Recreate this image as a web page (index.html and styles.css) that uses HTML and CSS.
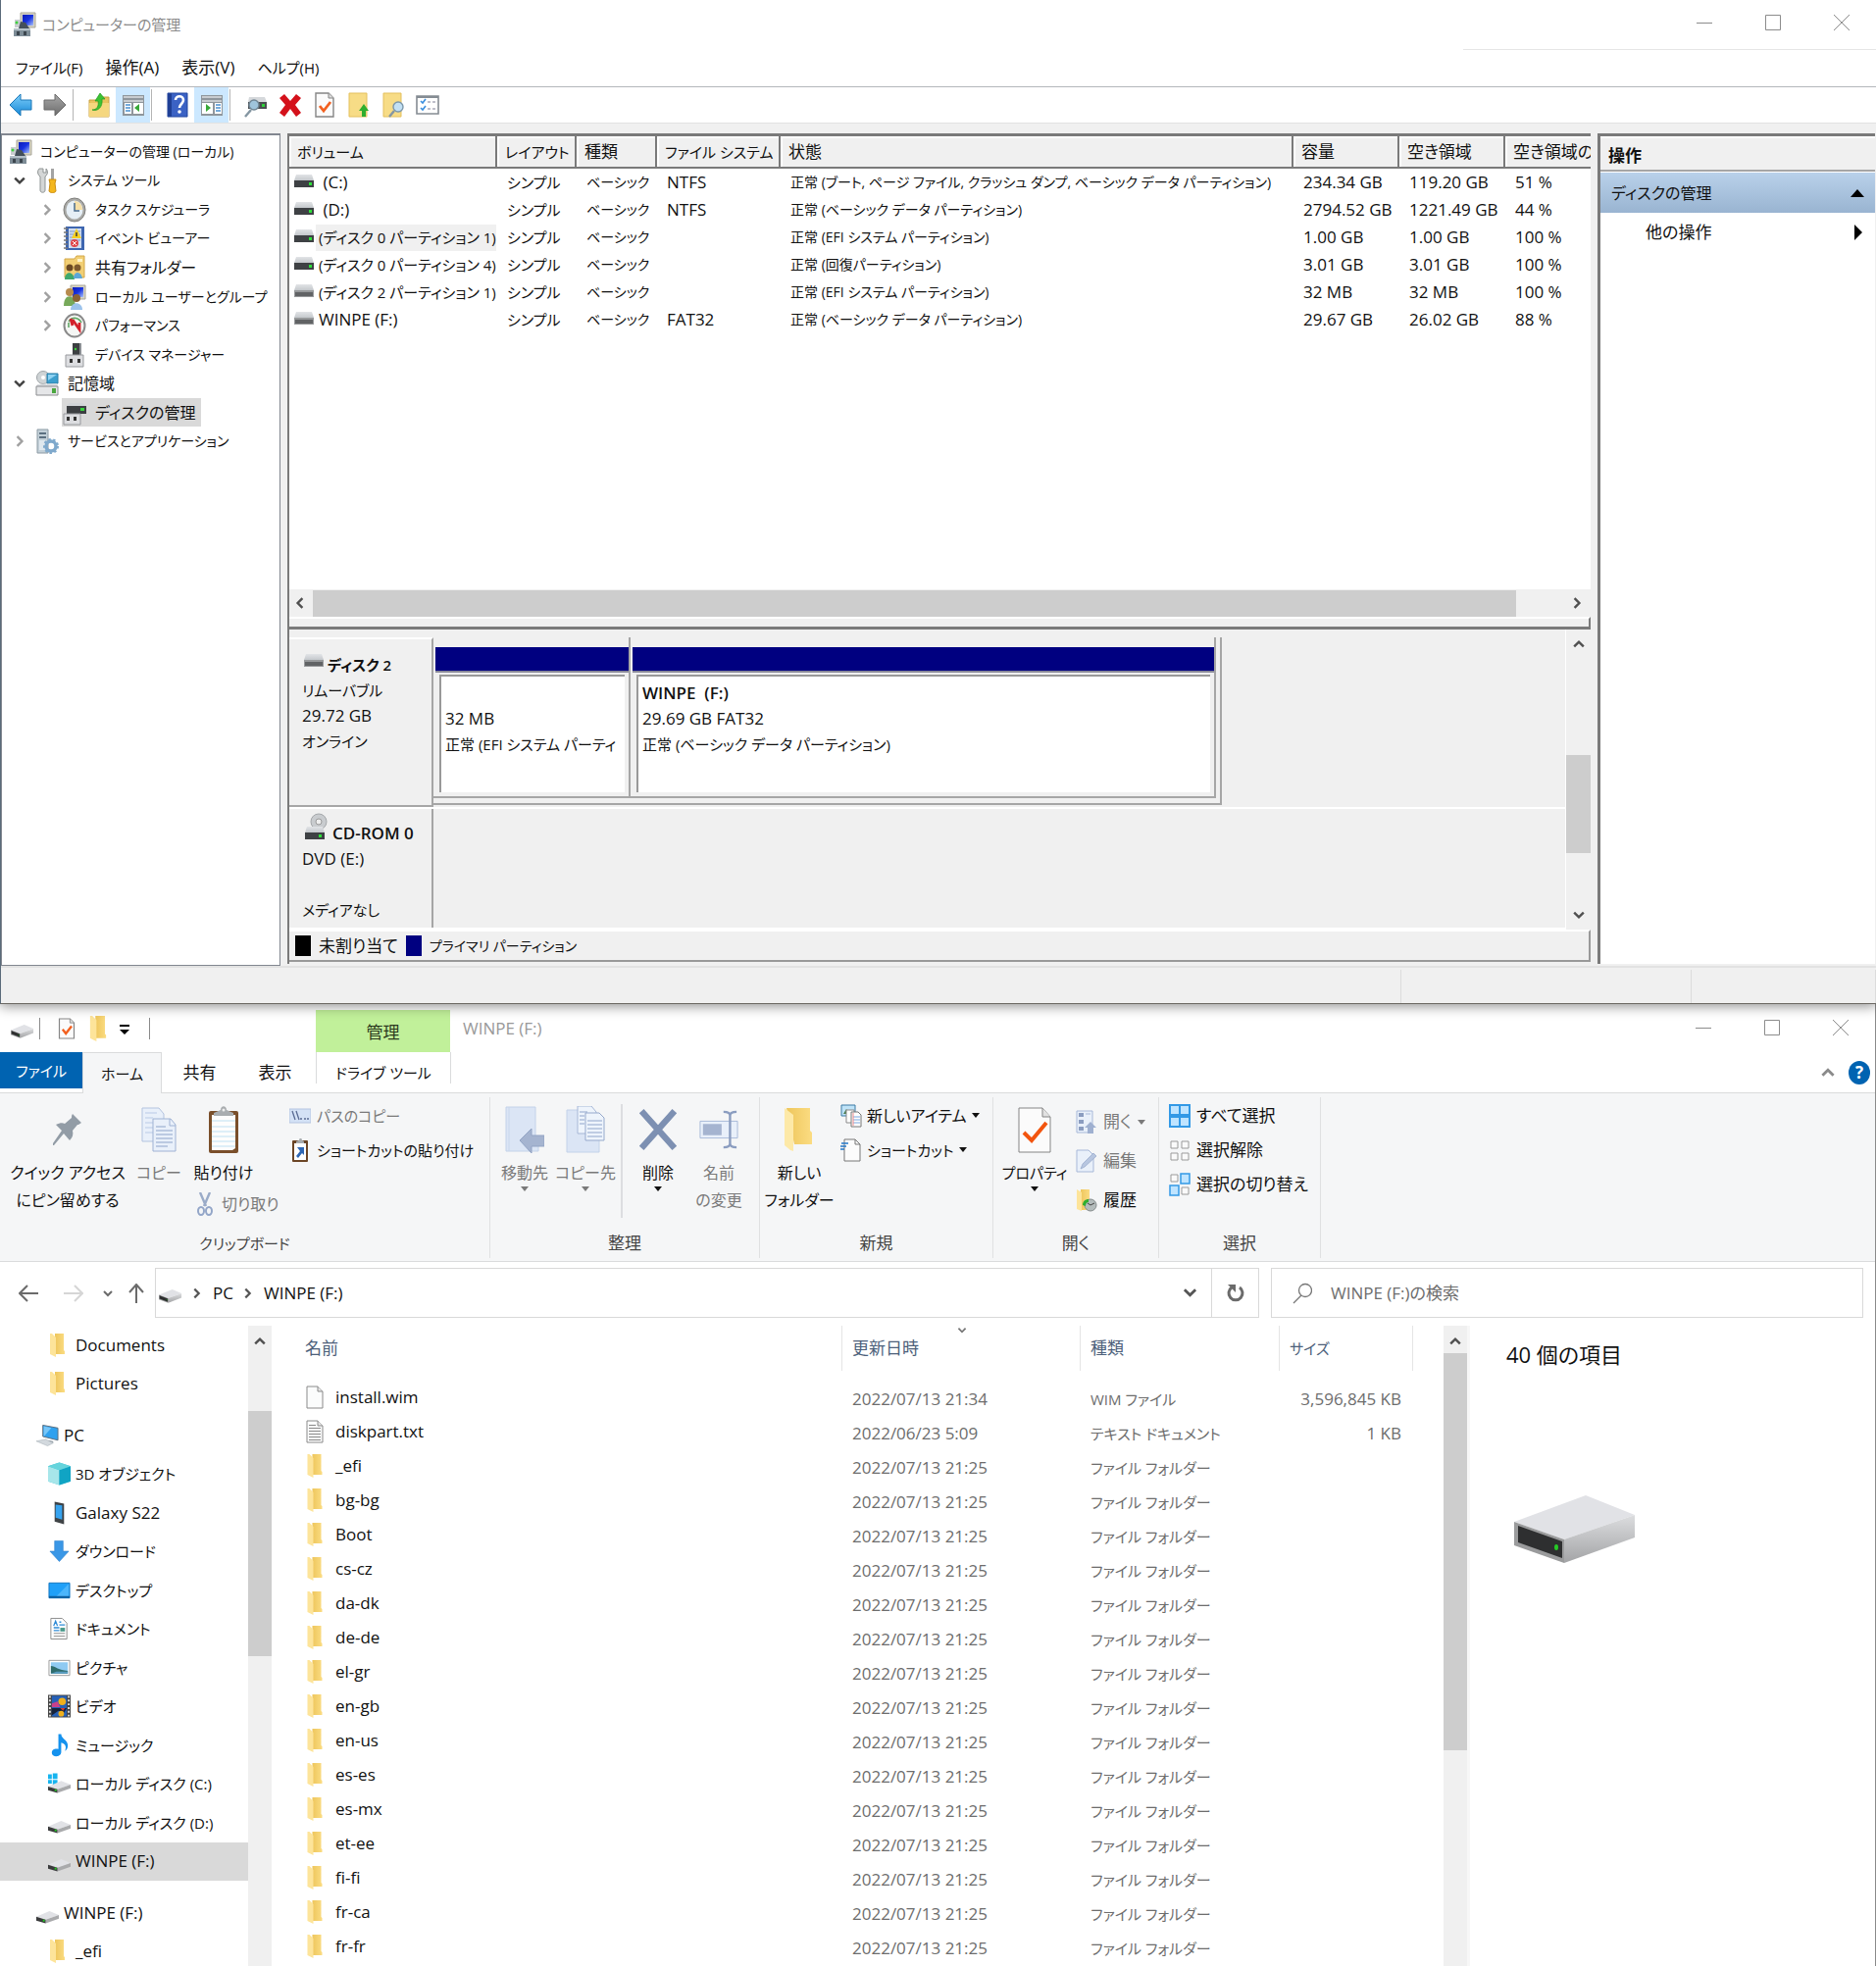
FILE: index.html
```html
<!DOCTYPE html>
<html lang="ja">
<head>
    <meta charset="UTF-8">
    <meta name="viewport" content="width=device-width, initial-scale=1.0">
    <title>コンピューターの管理</title>
    <link rel="stylesheet" href="styles.css">
</head>
<body>
    <!-- icon sprite -->
    <svg class="sprite" aria-hidden="true">
        <defs>
            <linearGradient id="gFolder" x1="0" x2="1"><stop offset="0" stop-color="#eec65c"/><stop offset="1" stop-color="#fbdc82"/></linearGradient>
            <linearGradient id="gBlue" x1="0" y1="0" x2="0" y2="1"><stop offset="0" stop-color="#7fd0fb"/><stop offset="1" stop-color="#1687d6"/></linearGradient>
            <linearGradient id="gGray" x1="0" y1="0" x2="0" y2="1"><stop offset="0" stop-color="#a8a8a8"/><stop offset="1" stop-color="#6c6c6c"/></linearGradient>
            <linearGradient id="gScreen" x1="0" y1="0" x2="1" y2="1"><stop offset="0" stop-color="#0a1bb8"/><stop offset=".5" stop-color="#1832e0"/><stop offset="1" stop-color="#a9c2fa"/></linearGradient>
            <linearGradient id="gSide" x1="0" y1="0" x2="0" y2="1"><stop offset="0" stop-color="#dcdddf"/><stop offset="1" stop-color="#a3a4a6"/></linearGradient>
            <linearGradient id="gTop" x1="0" y1="0" x2="0" y2="1"><stop offset="0" stop-color="#e2e4e7"/><stop offset="1" stop-color="#c4c8cc"/></linearGradient>
        </defs>
        <symbol id="i-computer" viewBox="0 0 24 26">
            <path d="M8 1h15v15H8z" fill="#d6d3c4" stroke="#a9a698"/>
            <path d="M10 3h11v11H10z" fill="url(#gScreen)"/>
            <path d="M2 8h6v8H2z" fill="#c9ccd0"/><circle cx="4" cy="11" r="1.5" fill="#3fd13f"/>
            <path d="M8 10l5 1 4 6H6z" fill="#44505a"/>
            <path d="M1 17h17v8H1z" fill="#7e8d97"/><path d="M1 17h17v2H1z" fill="#b4c0c8"/>
            <path d="M4 20h3v4H4zM11 20h3v4h-3z" fill="#3c464e"/>
        </symbol>
        <symbol id="i-back" viewBox="0 0 24 26"><path d="M1 13L12 2v6h11v10H12v6z" fill="url(#gBlue)" stroke="#1c78b8"/></symbol>
        <symbol id="i-fwd" viewBox="0 0 24 26"><path d="M23 13L12 2v6H1v10h11v6z" fill="url(#gGray)" stroke="#6a6a6a"/></symbol>
        <symbol id="i-folderup" viewBox="0 0 24 26">
            <path d="M2 8h9l2-3h9v20H2z" fill="#e9c35e" stroke="#c9a040"/><path d="M2 11h20v14H2z" fill="#f5d77f"/>
            <path d="M5 18c5 0 7-4 6-9H8l5-8 5 6h-3c1 8-4 13-10 11z" fill="#3cc234" stroke="#1f9a20" stroke-width=".7"/>
        </symbol>
        <symbol id="i-paneleft" viewBox="0 0 24 26">
            <path d="M1 3h22v21H1z" fill="#8f969c"/><path d="M2 4h20v2H2zM2 8h20v2H2z" fill="#c8ccd0"/>
            <path d="M3 11h7v11H3zM12 11h10v11H12z" fill="#fff"/>
            <path d="M4 13h5M4 16h5M4 19h5" stroke="#4a90d0" stroke-width="1.5"/><path d="M18 12v8l-5-4z" fill="#38a838"/>
        </symbol>
        <symbol id="i-paneright" viewBox="0 0 24 26">
            <path d="M1 3h22v21H1z" fill="#8f969c"/><path d="M2 4h20v2H2zM2 8h20v2H2z" fill="#c8ccd0"/>
            <path d="M2 11h11v11H2zM15 11h7v11h-7z" fill="#fff"/>
            <path d="M16 13h5M16 16h5M16 19h5" stroke="#4a90d0" stroke-width="1.5"/><path d="M6 12v8l5-4z" fill="#38a838"/>
        </symbol>
        <symbol id="i-help" viewBox="0 0 24 26">
            <path d="M2 1h20v24H2z" fill="#3b62c4"/><path d="M2 1h4v24H2z" fill="#1f3f94"/><path d="M2 25V1h20v24z" fill="none" stroke="#2347a0"/>
            <path d="M10 8c0-5 8-5 8 0 0 4-4 4-4 8" fill="none" stroke="#fff" stroke-width="2.6"/><circle cx="14" cy="20" r="1.8" fill="#fff"/>
        </symbol>
        <symbol id="i-drivesearch" viewBox="0 0 24 26">
            <path d="M5 5h16l2 5H4z" fill="#d5d8db"/><path d="M4 10h19v7H4z" fill="#4a4d50"/><path d="M18 12h3v3h-3z" fill="#2fd03a"/>
            <circle cx="10" cy="13" r="5" fill="#9fc4dc" stroke="#708594" stroke-width="1.4"/><path d="M7 18l-6 7" stroke="#8496a2" stroke-width="2.4"/>
        </symbol>
        <symbol id="i-redx" viewBox="0 0 24 26"><path d="M6 2l6 7 6-7 5 4-6 7 6 8-5 4-6-8-6 8-5-4 6-8-6-7z" fill="#d4111b"/></symbol>
        <symbol id="i-checkdoc" viewBox="0 0 24 26">
            <path d="M3 1h13l5 5v19H3z" fill="#fbfbfb" stroke="#858585" stroke-width="1.4"/><path d="M16 1v5h5" fill="#ddd" stroke="#858585"/>
            <path d="M7 14l4 5 7-9" fill="none" stroke="#f2601f" stroke-width="2.8"/>
        </symbol>
        <symbol id="i-foldergreen" viewBox="0 0 24 26">
            <path d="M2 1h18v24H2z" fill="#f7dc86" stroke="#e3bf5c"/><path d="M17 12l5 7h-3v6h-4v-6h-3z" fill="#2fae2f"/>
        </symbol>
        <symbol id="i-foldersearch" viewBox="0 0 24 26">
            <path d="M2 1h18v24H2z" fill="#f7dc86" stroke="#e3bf5c"/><circle cx="17" cy="15" r="5" fill="#c3e1f5" stroke="#7c98ab" stroke-width="1.4"/><path d="M13 19l-5 6" stroke="#8496a2" stroke-width="2.4"/>
        </symbol>
        <symbol id="i-listcheck" viewBox="0 0 24 26">
            <path d="M1 4h22v18H1z" fill="#fff" stroke="#858c93" stroke-width="1.6"/><path d="M1 4h22v2H1z" fill="#858c93"/>
            <path d="M5 9l2 2 3-4M5 16l2 2 3-4" fill="none" stroke="#3a8ede" stroke-width="1.6"/><path d="M12 10h3M12 17h3M17 10h3M17 17h3" stroke="#aab" stroke-width="1.4"/>
        </symbol>
        <symbol id="i-tools" viewBox="0 0 24 26">
            <path d="M4 1C2 3 2 7 5 9v14c0 3 5 3 5 0V9c3-2 3-6 1-8v4H8V1z" fill="#d4d6d6" stroke="#8f9494"/>
            <path d="M16 1h3v11h-3z" fill="#a3a3a3"/><path d="M14 12h7l-1 4 1 8c-1 2-6 2-7 0l1-8z" fill="#f4b71e" stroke="#cc8d10"/>
        </symbol>
        <symbol id="i-clock" viewBox="0 0 24 26">
            <ellipse cx="12" cy="13" rx="11" ry="12" fill="#a9a9a6" stroke="#7f7f7c"/><ellipse cx="12" cy="13" rx="8.500" ry="9.500" fill="#e6eff6"/>
            <path d="M12 13V4c5 0 8 4 8 9z" fill="#f6dfa6"/><path d="M12 6v8h5" fill="none" stroke="#4b6c8c" stroke-width="1.5"/>
        </symbol>
        <symbol id="i-event" viewBox="0 0 24 26">
            <path d="M3 1h19v24H3z" fill="#3e66b0"/><path d="M6 3h13v20H6z" fill="#cfdcf0"/><path d="M7 6h11M7 9h11M7 12h11M7 15h11" stroke="#7f98c4"/>
            <path d="M1 3h4M1 7h4M1 11h4M1 15h4M1 19h4M1 23h4" stroke="#777" stroke-width="1.4"/>
            <path d="M14 3l5 10H9z" fill="#f6cf1f"/><path d="M14 7v4" stroke="#333" stroke-width="1.4"/><circle cx="12" cy="18" r="4" fill="#e0484c"/><path d="M10 16l4 4M14 16l-4 4" stroke="#fff"/>
        </symbol>
        <symbol id="i-share" viewBox="0 0 24 26">
            <path d="M2 4h10l2-3h8v22H2z" fill="#f2cf74" stroke="#d3a748"/><path d="M15 4h5v3h-5z" fill="#fff3c8"/>
            <circle cx="7" cy="13" r="3.500" fill="#6b4a24"/><circle cx="15" cy="13" r="3.500" fill="#7d5a2e"/>
            <path d="M2 25c0-9 9-9 10 0z" fill="#3fa86c"/><path d="M11 24c0-8 8-8 9 0z" fill="#5ba7d8"/>
        </symbol>
        <symbol id="i-users" viewBox="0 0 24 26">
            <path d="M8 1h15v14H8z" fill="#d6d3c4" stroke="#a9a698"/><path d="M10 3h11v10H10z" fill="url(#gScreen)"/>
            <circle cx="7" cy="8" r="4" fill="#b78b4e"/><path d="M1 22c0-13 11-13 12 0z" fill="#77a95a"/>
            <circle cx="14" cy="14" r="4" fill="#8a6234"/><path d="M8 26c0-9 12-9 12 0z" fill="#9cc3ec"/>
        </symbol>
        <symbol id="i-perf" viewBox="0 0 24 26">
            <ellipse cx="12" cy="13" rx="10.500" ry="11.500" fill="#f5f6f4" stroke="#8a8a8a" stroke-width="2"/>
            <path d="M6 9c3-5 10-5 13 1" fill="none" stroke="#62a866" stroke-width="1.6"/><path d="M8 6l2 7M10 7l7 10V10" fill="none" stroke="#d2202a" stroke-width="2.8"/><path d="M6 15v-5" stroke="#62a866" stroke-width="1.6"/>
        </symbol>
        <symbol id="i-device" viewBox="0 0 24 26">
            <path d="M10 1h7v12h-7z" fill="#3c3f42"/><circle cx="13" cy="7" r="1.200" fill="#3bd43b"/><path d="M17 1h2v12h-2z" fill="#8b8f93"/>
            <path d="M3 13h18v12H3z" fill="#dcdde0" stroke="#989a9e"/><path d="M7 17h3v4H7zM15 17h3v4h-3z" fill="#333"/>
        </symbol>
        <symbol id="i-storage" viewBox="0 0 24 26">
            <circle cx="8" cy="7" r="6.500" fill="#cfd4d6" stroke="#9fa5a8"/><circle cx="8" cy="7" r="2" fill="#fff"/>
            <path d="M12 3h11v10H12z" fill="#3c9fce" stroke="#2b7ea8"/><path d="M13 4h9l-9 6z" fill="#8fd2f2"/>
            <path d="M2 14l20-1 1 4H1z" fill="#d9dcdf"/><path d="M1 16h22v9H1z" fill="#e5e6e8" stroke="#8b8d90"/><path d="M17 18h4v5h-4z" fill="#4ba73f"/>
        </symbol>
        <symbol id="i-diskmgr" viewBox="0 0 24 26">
            <path d="M6 3h15l2 3H4z" fill="#d2d5d8"/><path d="M4 6h20v8H4z" fill="#3c3f42"/><path d="M18 8h4v3h-4z" fill="#37d23c"/>
            <path d="M1 14h17v11H1z" fill="#dcdde0" stroke="#989a9e"/><path d="M4 17h3v4H4zM11 17h3v4h-3z" fill="#333"/>
        </symbol>
        <symbol id="i-services" viewBox="0 0 24 26">
            <path d="M2 1h11v24H2z" fill="#c3d0d8" stroke="#8c9aa4"/><path d="M4 4h7v2H4zM4 8h7v2H4z" fill="#5c7080"/><path d="M4 12h7v10H4z" fill="#dfe8ee"/>
            <circle cx="16" cy="18" r="5" fill="none" stroke="#7fa9cc" stroke-width="3.500"/><circle cx="16" cy="18" r="7" fill="none" stroke="#7fa9cc" stroke-width="2" stroke-dasharray="2.5 2.5"/>
        </symbol>
        <symbol id="i-vol" viewBox="0 0 20 14">
            <path d="M2 0h16l2 6H0z" fill="url(#gTop)"/><path d="M0 6h20v7H0z" fill="#3e4144"/><path d="M15 8h3v3h-3z" fill="#2ee03a"/>
        </symbol>
        <symbol id="i-volrm" viewBox="0 0 20 14">
            <path d="M2 0h16l2 6H0z" fill="url(#gTop)"/><path d="M0 6h20v7H0z" fill="#97999b"/><path d="M1 8h18v4H1z" fill="#616365"/>
        </symbol>
        <symbol id="i-cd" viewBox="0 0 24 28">
            <circle cx="15" cy="9" r="8" fill="#c9cccf" stroke="#a5a8ab"/><circle cx="15" cy="9" r="3" fill="#eee" stroke="#999"/>
            <path d="M3 14h16l2 6H1z" fill="url(#gTop)"/><path d="M1 20h20v7H1z" fill="#3e4144"/><path d="M15 22h3v3h-3z" fill="#2ee03a"/>
        </symbol>
        <symbol id="i-drive" viewBox="0 0 128 70" preserveAspectRatio="none">
            <path d="M0 27L73 0l50 20-72 25z" fill="#e1e2e6"/><path d="M51 45l72-25v23L51 69z" fill="url(#gSide)"/>
            <path d="M0 27l51 18v24L0 51z" fill="#9a9b9c"/><path d="M4 31l45 16v17L4 48z" fill="#2e2f30"/><ellipse cx="43" cy="53" rx="2" ry="3" fill="#26c926"/>
        </symbol>
        <symbol id="i-folder" viewBox="0 0 15 24">
            <path d="M5 0h9v17l1 1v3H5z" fill="url(#gFolder)"/><path d="M0 0h2l4 4v20l-2-1-4-2z" fill="#fde49a"/>
        </symbol>
        <symbol id="i-file" viewBox="0 0 18 24"><path d="M1 1h11l5 5v17H1z" fill="#fbfcfc" stroke="#8a8a8a"/><path d="M12 1v5h5" fill="#e8e8e8" stroke="#8a8a8a"/></symbol>
        <symbol id="i-text" viewBox="0 0 18 24"><path d="M1 1h11l5 5v17H1z" fill="#fbfcfc" stroke="#8a8a8a"/><path d="M12 1v5h5" fill="#e8e8e8" stroke="#8a8a8a"/><path d="M3 5.500h7M3 8.500h12M3 11.500h12M3 14.500h12M3 17.500h12M3 20.500h12" stroke="#888"/></symbol>
        <symbol id="i-pc" viewBox="0 0 24 24">
            <path d="M7 1l16 3v13L7 13z" fill="#2fa1ef" stroke="#5c6c7a"/><path d="M8 2l8 2-8 9z" fill="#77c6f8"/><path d="M13 17l5 1v2l-6-1z" fill="#98a2ab"/><path d="M0 18l10-2 8 4-6 3z" fill="#d3d9de" stroke="#a9b2ba" stroke-width=".6"/>
        </symbol>
        <symbol id="i-3d" viewBox="0 0 24 24"><path d="M12 0l12 4v16l-12 4L0 20V4z" fill="#3cc2d4"/><path d="M0 4l12 4v16L0 20z" fill="#a7e6ea"/><path d="M12 8l12-4v16l-12 4z" fill="#10a4c4"/><path d="M0 4l12-4 12 4-12 4z" fill="#66d4dc"/></symbol>
        <symbol id="i-phone" viewBox="0 0 24 24"><path d="M7 0l10 2v22L7 21z" fill="#3f4346"/><path d="M8 3l7 1v15l-7-2z" fill="#36a3ef"/></symbol>
        <symbol id="i-down" viewBox="0 0 24 24"><path d="M7 1h9v11h6L12 23 2 12h5z" fill="#3a97e6" stroke="#2b7fcc" stroke-width=".6"/></symbol>
        <symbol id="i-desktop" viewBox="0 0 24 24"><path d="M1 4h22v16H1z" fill="#1fa0f8" stroke="#1476c0"/><path d="M8 19L22 5v14z" fill="#4bb5fb"/><path d="M1 19h22" stroke="#0c5c9c" stroke-width="2"/></symbol>
        <symbol id="i-document" viewBox="0 0 24 24"><path d="M3 1h12l5 5v17H3z" fill="#fff" stroke="#8a8a8a"/><path d="M6 9l2-5 2 5M12 5h2M12 8h6M6 11h6M6 14h6" stroke="#2d8ad6" stroke-width="1.400" fill="none"/><path d="M13 11h5v4h-5z" fill="#4b9a8c"/><path d="M6 17h12M6 20h12" stroke="#888"/></symbol>
        <symbol id="i-picture" viewBox="0 0 24 24"><path d="M1 4h22v16H1z" fill="#fff" stroke="#9a9a9a"/><path d="M3 6h18v12H3z" fill="#8fcaf2"/><path d="M3 10c5 0 8 5 18 5v3H3z" fill="#2f6d6d"/><path d="M9 16h12v2H3z" fill="#5b9ec4"/></symbol>
        <symbol id="i-video" viewBox="0 0 24 24"><path d="M0 0h24v24H0z" fill="#444"/><path d="M4 1h16v22H4z" fill="#2660b8"/><path d="M2 1v22M22 1v22" stroke="#ddd" stroke-width="2" stroke-dasharray="2 2"/><circle cx="15" cy="7" r="4" fill="#f0b01c"/><path d="M4 9l6-2 3 6H4z" fill="#c8408c"/><path d="M4 14h16l-3 5-6-2-7 5z" fill="#17243c"/><path d="M13 14h5l-2 3z" fill="#d83a2a"/><circle cx="14" cy="20" r="3" fill="#f0b01c"/></symbol>
        <symbol id="i-music" viewBox="0 0 24 24"><path d="M11 0h3c0 5 7 6 7 12 0 3-1 5-3 6 2-5 0-8-4-9v10c0 6-10 6-10 1 0-4 4-5 7-4z" fill="#1592ee"/></symbol>
        <symbol id="i-windrive" viewBox="0 0 24 24"><path d="M0 2h4v5H0zM5 1h5v6H5zM0 8h4v4H0zM5 8h5v5H5z" fill="#16b4ef"/><path d="M0 15l14-6 10 4-14 5z" fill="#e1e2e6"/><path d="M10 18l14-5v4l-14 5z" fill="#a9aaac"/><path d="M0 15l10 3v4L0 19z" fill="#3a3b3c"/><path d="M7 18h2v2H7z" fill="#2c2"/></symbol>
        <symbol id="i-driven" viewBox="0 0 24 24"><path d="M0 16l14-6 10 4-14 5z" fill="#e1e2e6"/><path d="M10 19l14-5v4l-14 5z" fill="#a9aaac"/><path d="M0 16l10 3v4L0 20z" fill="#3a3b3c"/><path d="M7 19h2v2H7z" fill="#2c2"/></symbol>
        <symbol id="i-pin" viewBox="0 0 30 34"><path d="M20 1l9 9-3 2-1 0-5 6c1 4 0 7-3 10l-6-7L1 33H0v-2l9-13-6-6c4-2 7-2 9-1l7-6c0-1 0-3 1-4z" fill="#929ca6"/></symbol>
        <symbol id="i-copy" viewBox="0 0 36 46">
            <path d="M1 1h17l5 6v28H1z" fill="#e9f0fa" stroke="#b3c3df"/><path d="M4 6h12M4 11h8M4 16h8M4 21h8M4 26h8" stroke="#b9cae6"/>
            <path d="M12 12h18l5 6v27H12z" fill="#e9f0fa" stroke="#9fb2d4"/><path d="M29 12v7h6" fill="none" stroke="#9fb2d4"/><path d="M15 20h10M15 24h17M15 28h17M15 32h17M15 36h17M15 40h12" stroke="#8ea4ca"/>
        </symbol>
        <symbol id="i-paste" viewBox="0 0 30 48"><rect y="5" width="30" height="43" rx="2" fill="#7a4f2b"/><path d="M3 9h24v34l-3 2H3z" fill="#fdfdfd"/><path d="M3 15h24M3 21h24M3 26h24M3 31h24M3 36h24M3 41h24" stroke="#bfe0f2"/><path d="M5 10V7l7-3c0-5 6-5 6 0l7 3v3z" fill="#a9adb0"/><circle cx="15" cy="4" r="1.500" fill="#eee"/></symbol>
        <symbol id="i-cut" viewBox="0 0 16 24"><path d="M3 0l6 14M13 0L7 14" stroke="#9aabc8" stroke-width="2.400"/><ellipse cx="4" cy="19" rx="3" ry="4" fill="none" stroke="#93a6c8" stroke-width="2"/><ellipse cx="12" cy="19" rx="3" ry="4" fill="none" stroke="#93a6c8" stroke-width="2"/></symbol>
        <symbol id="i-path" viewBox="0 0 22 24"><path d="M0 5h22v14H0z" fill="#d4e2f6" stroke="#b4c4e0"/><path d="M3 7l3 9M7 7l3 9" stroke="#5a6c94" stroke-width="1.300"/><path d="M11 15h2M15 15h2M18 15h2" stroke="#5a6c94" stroke-width="1.500"/></symbol>
        <symbol id="i-pasteshort" viewBox="0 0 22 24"><rect x="3" y="2" width="16" height="22" rx="1" fill="#6b4526"/><path d="M5 5h12v17H5z" fill="#fff"/><path d="M7 5V3l3-1c0-3 3-3 3 0l2 1v2z" fill="#a9adb0"/><path d="M8 9h7v8l-2-2-4 5-2-2 4-5z" fill="#2f67b4"/></symbol>
        <symbol id="i-moveto" viewBox="0 0 40 48"><path d="M1 1h30v30l3 2v13H1z" fill="#dbe5f5" stroke="#c3d2e9"/><path d="M4 1v45" stroke="#c9d7ec"/><path d="M15 35l12-12v7h13v11H27v7z" fill="#a5b4d0" stroke="#93a4c4"/></symbol>
        <symbol id="i-copyto" viewBox="0 0 40 48"><path d="M1 4h26v28l7 2v13H1z" fill="#dbe5f5" stroke="#c3d2e9"/><path d="M12 0h14l5 6v22H12z" fill="#eef4fc" stroke="#a6b7d6"/><path d="M20 7h14l5 5v23H20z" fill="#eef4fc" stroke="#96a9cc"/><path d="M14 6h8M14 10h5M14 14h5M14 18h5M22 15h15M22 19h15M22 23h15M22 27h15M22 31h15" stroke="#90a5cb"/></symbol>
        <symbol id="i-delete" viewBox="0 0 38 42"><path d="M3 3l32 36M35 3L3 39" stroke="#7d90b2" stroke-width="6"/></symbol>
        <symbol id="i-rename" viewBox="0 0 42 42"><path d="M1 12h40v18H1z" fill="#e9f0fa" stroke="#a7b8d8"/><path d="M4 15h20v12H4z" fill="#a5b4d0"/><path d="M26 2c4 0 7 1 7 4v30c0 3-3 4-7 4M40 2c-4 0-7 1-7 4M40 40c-4 0-7-1-7-4" fill="none" stroke="#8b9dc0" stroke-width="2.500"/></symbol>
        <symbol id="i-newfolder" viewBox="0 0 30 46"><path d="M2 1h24v23l2 2v12H10z" fill="url(#gFolder)"/><path d="M0 1l9 7v37l-3-1-6-5z" fill="#fde9a8"/></symbol>
        <symbol id="i-newitem" viewBox="0 0 22 24"><path d="M1 1h14v11H1z" fill="#bfe3f8" stroke="#3a7aa4"/><path d="M3 10l3-5 3 5z" fill="#4b7d4e"/><path d="M6 6h8v13H6z" fill="#fff" stroke="#8a8a8a"/><path d="M11 8h7l3 3v12H11z" fill="#fff" stroke="#777"/><path d="M13 13h7M13 16h7M13 19h7" stroke="#78a8e0"/><path d="M13 9v13" stroke="#e88"/></symbol>
        <symbol id="i-shortcut" viewBox="0 0 22 24"><path d="M4 1h11l5 5v17H4z" fill="#fcfcfc" stroke="#777"/><path d="M15 1v5h5" fill="none" stroke="#777"/><path d="M1 5h7M0 8h6M0 11h4" stroke="#2478c8" stroke-width="1.500"/></symbol>
        <symbol id="i-prop" viewBox="0 0 34 48"><path d="M1 2h24l8 9v36H1z" fill="#fbfbfb" stroke="#858585"/><path d="M25 2v9h8" fill="#e2e2e2" stroke="#858585"/><path d="M6 27l8 8 15-18" fill="none" stroke="#f2550f" stroke-width="4"/></symbol>
        <symbol id="i-open" viewBox="0 0 22 24"><path d="M1 1h16v22H1z" fill="#e9f0fa" stroke="#a7b8d8"/><path d="M3 3h5v4H3zM3 10h5v4H3zM3 17h5v4H3z" fill="#8b9dc0"/><path d="M10 4h5" stroke="#a7b8d8"/><path d="M15 12l6 6h-3v6h-6v-6H9z" fill="#9fb0d0"/></symbol>
        <symbol id="i-edit" viewBox="0 0 22 24"><path d="M1 1h12l5 5v17H1z" fill="#e9f0fa" stroke="#a7b8d8"/><path d="M5 20l2-5L18 4l3 3L9 18z" fill="#b7c6e0" stroke="#93a6c8" stroke-width=".7"/></symbol>
        <symbol id="i-history" viewBox="0 0 22 24"><path d="M5 1h9v21H5z" fill="url(#gFolder)"/><path d="M1 1l5 3v19l-5-2z" fill="#fde49a"/><circle cx="15" cy="17" r="6" fill="#b4bcbc" stroke="#858c8c"/><path d="M12 15l3 2 4-2" stroke="#444" fill="none"/><path d="M7 17c0-4 3-6 6-6v3c-2 0-3 2-3 4z" fill="#2fae2f"/></symbol>
        <symbol id="i-selall" viewBox="0 0 22 24"><path d="M0 0h22v24H0z" fill="#3399e6"/><path d="M2 2h8v8H2zM12 2h8v8h-8zM2 14h8v8H2zM12 14h8v8h-8z" fill="#bfe4ff"/></symbol>
        <symbol id="i-selnone" viewBox="0 0 22 24"><path d="M2 3h7v7H2zM13 3h7v7h-7zM2 15h7v7H2zM13 15h7v7h-7z" fill="#fafafa" stroke="#9a9a9a"/></symbol>
        <symbol id="i-selinv" viewBox="0 0 22 24"><path d="M2 2h7v7H2zM13 15h7v7h-7z" fill="#fafafa" stroke="#9a9a9a"/><path d="M12 1h9v10h-9zM1 13h9v10H1z" fill="#bfe4ff" stroke="#3399e6" stroke-width="1.500"/></symbol>
        <symbol id="i-v" viewBox="0 0 10 10"><path d="M1 3l4 4 4-4" fill="none" stroke="currentColor" stroke-width="2"/></symbol>
        <symbol id="i-up" viewBox="0 0 10 10"><path d="M1 7l4-4 4 4" fill="none" stroke="currentColor" stroke-width="2"/></symbol>
        <symbol id="i-r" viewBox="0 0 10 10"><path d="M3 1l4 4-4 4" fill="none" stroke="currentColor" stroke-width="2"/></symbol>
        <symbol id="i-l" viewBox="0 0 10 10"><path d="M7 1L3 5l4 4" fill="none" stroke="currentColor" stroke-width="2"/></symbol>
        <symbol id="i-tri" viewBox="0 0 8 5"><path d="M0 0h8L4 5z" fill="currentColor"/></symbol>
        <symbol id="w-min" viewBox="0 0 16 16"><path d="M0 8.500h16" stroke="#8c8c8c"/></symbol>
        <symbol id="w-max" viewBox="0 0 16 16"><path d="M.5.5h15v15H.5z" fill="none" stroke="#8c8c8c"/></symbol>
        <symbol id="w-close" viewBox="0 0 16 16"><path d="M0 0l16 16M16 0L0 16" stroke="#8c8c8c"/></symbol>
    </svg>

    <!-- Computer Management -->
    <section class="mmc">
        <header class="titlebar">
            <svg class="ico"><use href="#i-computer"/></svg>
            <h1 class="title-text">コンピューターの管理</h1>
            <div class="win-controls">
                <button aria-label="最小化"><svg><use href="#w-min"/></svg></button>
                <button aria-label="最大化"><svg><use href="#w-max"/></svg></button>
                <button aria-label="閉じる"><svg><use href="#w-close"/></svg></button>
            </div>
        </header>
        <nav class="menubar">
            <button class="kana">ファイル(F)</button>
            <button>操作(A)</button>
            <button>表示(V)</button>
            <button class="kana">ヘルプ(H)</button>
        </nav>
        <div class="toolbar">
            <button aria-label="戻る"><svg><use href="#i-back"/></svg></button>
            <button aria-label="進む"><svg><use href="#i-fwd"/></svg></button>
            <span class="tool-sep"></span>
            <button aria-label="上へ"><svg><use href="#i-folderup"/></svg></button>
            <button class="on" aria-label="ツリー"><svg><use href="#i-paneleft"/></svg></button>
            <span class="tool-sep"></span>
            <button aria-label="ヘルプ"><svg><use href="#i-help"/></svg></button>
            <button class="on" aria-label="操作ウィンドウ"><svg><use href="#i-paneright"/></svg></button>
            <span class="tool-sep"></span>
            <button aria-label="再スキャン"><svg><use href="#i-drivesearch"/></svg></button>
            <button aria-label="削除"><svg><use href="#i-redx"/></svg></button>
            <button aria-label="プロパティ"><svg><use href="#i-checkdoc"/></svg></button>
            <button aria-label="開く"><svg><use href="#i-foldergreen"/></svg></button>
            <button aria-label="エクスプローラー"><svg><use href="#i-foldersearch"/></svg></button>
            <button aria-label="設定"><svg><use href="#i-listcheck"/></svg></button>
        </div>

        <div class="panes">
            <ul class="tree">
                <li class="lv0"><svg class="ico"><use href="#i-computer"/></svg><span class="kana-s">コンピューターの管理 (ローカル)</span></li>
                <li class="lv1"><svg class="chev open"><use href="#i-v"/></svg><svg class="ico"><use href="#i-tools"/></svg><span class="kana-s">システム ツール</span></li>
                <li class="lv2"><svg class="chev"><use href="#i-r"/></svg><svg class="ico"><use href="#i-clock"/></svg><span class="kana-s">タスク スケジューラ</span></li>
                <li class="lv2"><svg class="chev"><use href="#i-r"/></svg><svg class="ico"><use href="#i-event"/></svg><span class="kana-s">イベント ビューアー</span></li>
                <li class="lv2"><svg class="chev"><use href="#i-r"/></svg><svg class="ico"><use href="#i-share"/></svg><span>共有フォルダー</span></li>
                <li class="lv2"><svg class="chev"><use href="#i-r"/></svg><svg class="ico"><use href="#i-users"/></svg><span class="kana-s">ローカル ユーザーとグループ</span></li>
                <li class="lv2"><svg class="chev"><use href="#i-r"/></svg><svg class="ico"><use href="#i-perf"/></svg><span class="kana-s">パフォーマンス</span></li>
                <li class="lv3"><svg class="ico"><use href="#i-device"/></svg><span class="kana-s">デバイス マネージャー</span></li>
                <li class="lv1"><svg class="chev open"><use href="#i-v"/></svg><svg class="ico"><use href="#i-storage"/></svg><span>記憶域</span></li>
                <li class="lv3 selected"><svg class="ico"><use href="#i-diskmgr"/></svg><span>ディスクの管理</span></li>
                <li class="lv1"><svg class="chev"><use href="#i-r"/></svg><svg class="ico"><use href="#i-services"/></svg><span class="kana-s">サービスとアプリケーション</span></li>
            </ul>

            <main class="disks">
                <div class="volumes">
                    <table class="vol-table">
                        <colgroup><col class="c-vol"><col class="c-lay"><col class="c-type"><col class="c-fs"><col><col class="c-size"><col class="c-size"><col class="c-pct"></colgroup>
                        <thead>
                            <tr><th class="kana">ボリューム</th><th class="kana">レイアウト</th><th>種類</th><th class="kana">ファイル システム</th><th>状態</th><th>容量</th><th>空き領域</th><th>空き領域の</th></tr>
                        </thead>
                        <tbody>
                            <tr><td><svg><use href="#i-vol"/></svg><span>&nbsp;(C:)</span></td><td>シンプル</td><td>ベーシック</td><td>NTFS</td><td>正常 (ブート, ページ ファイル, クラッシュ ダンプ, ベーシック データ パーティション)</td><td>234.34 GB</td><td>119.20 GB</td><td>51 %</td></tr>
                            <tr><td><svg><use href="#i-vol"/></svg><span>&nbsp;(D:)</span></td><td>シンプル</td><td>ベーシック</td><td>NTFS</td><td>正常 (ベーシック データ パーティション)</td><td>2794.52 GB</td><td>1221.49 GB</td><td>44 %</td></tr>
                            <tr class="focus"><td><svg><use href="#i-vol"/></svg><span class="kana">(ディスク 0 パーティション 1)</span></td><td>シンプル</td><td>ベーシック</td><td></td><td>正常 (EFI システム パーティション)</td><td>1.00 GB</td><td>1.00 GB</td><td>100 %</td></tr>
                            <tr><td><svg><use href="#i-vol"/></svg><span class="kana">(ディスク 0 パーティション 4)</span></td><td>シンプル</td><td>ベーシック</td><td></td><td>正常 (回復パーティション)</td><td>3.01 GB</td><td>3.01 GB</td><td>100 %</td></tr>
                            <tr><td><svg><use href="#i-volrm"/></svg><span class="kana">(ディスク 2 パーティション 1)</span></td><td>シンプル</td><td>ベーシック</td><td></td><td>正常 (EFI システム パーティション)</td><td>32 MB</td><td>32 MB</td><td>100 %</td></tr>
                            <tr><td><svg><use href="#i-volrm"/></svg><span>WINPE (F:)</span></td><td>シンプル</td><td>ベーシック</td><td>FAT32</td><td>正常 (ベーシック データ パーティション)</td><td>29.67 GB</td><td>26.02 GB</td><td>88 %</td></tr>
                        </tbody>
                    </table>
                </div>
                <div class="hscroll"><svg><use href="#i-l"/></svg><div class="hthumb"></div><svg><use href="#i-r"/></svg></div>
                <div class="splitter"></div>

                <div class="diskview">
                    <div class="disk-rows">
                        <div class="disk-row">
                            <div class="disk-label">
                                <h2><svg class="vol-ico"><use href="#i-volrm"/></svg><span class="kana">ディスク 2</span></h2>
                                <p class="kana">リムーバブル</p>
                                <p>29.72 GB</p>
                                <p class="kana">オンライン</p>
                            </div>
                            <div class="partitions">
                                <div class="part small">
                                    <div class="bar"></div>
                                    <div class="part-body"><p>&nbsp;</p><p>32 MB</p><p class="kana">正常 (EFI システム パーティ</p></div>
                                </div>
                                <div class="part">
                                    <div class="bar"></div>
                                    <div class="part-body"><p><b>WINPE&nbsp; (F:)</b></p><p>29.69 GB FAT32</p><p class="kana">正常 (ベーシック データ パーティション)</p></div>
                                </div>
                            </div>
                        </div>
                        <div class="disk-row cd">
                            <div class="disk-label">
                                <h2><svg class="cd-ico"><use href="#i-cd"/></svg>CD-ROM 0</h2>
                                <p>DVD (E:)</p>
                                <p>&nbsp;</p>
                                <p class="kana">メディアなし</p>
                            </div>
                        </div>
                    </div>
                    <div class="vscroll"><svg><use href="#i-up"/></svg><div class="vthumb"></div><svg><use href="#i-v"/></svg></div>
                </div>
                <div class="legend">
                    <i class="unalloc"></i><span>未割り当て</span>
                    <i class="primary"></i><span class="kana-s">プライマリ パーティション</span>
                </div>
            </main>

            <aside class="actions">
                <h2>操作</h2>
                <button class="act-head">ディスクの管理<svg viewBox="0 0 14 8"><path d="M0 8h14L7 0z"/></svg></button>
                <button class="act-item">他の操作<svg viewBox="0 0 8 16"><path d="M0 0v16l8-8z"/></svg></button>
            </aside>
        </div>
        <footer class="statusbar"><span></span><span></span><span></span></footer>
    </section>

    <!-- Explorer -->
    <section class="explorer">
        <header class="ex-title">
            <div class="qat">
                <svg class="drv"><use href="#i-drive"/></svg>
                <span class="qsep"></span>
                <button aria-label="プロパティ"><svg><use href="#i-checkdoc"/></svg></button>
                <button aria-label="新しいフォルダー"><svg><use href="#i-folder"/></svg></button>
                <button class="qmore" aria-label="カスタマイズ"><svg viewBox="0 0 10 10"><path d="M0 0h10v2H0zM0 5h10L5 10z"/></svg></button>
                <span class="qsep"></span>
            </div>
            <div class="ctx-head">管理</div>
            <div class="ex-name">WINPE (F:)</div>
            <div class="win-controls">
                <button aria-label="最小化"><svg><use href="#w-min"/></svg></button>
                <button aria-label="最大化"><svg><use href="#w-max"/></svg></button>
                <button aria-label="閉じる"><svg><use href="#w-close"/></svg></button>
            </div>
        </header>
        <nav class="tabs">
            <button class="t-file kana">ファイル</button>
            <button class="t-home kana">ホーム</button>
            <button class="t-plain">共有</button>
            <button class="t-plain">表示</button>
            <button class="t-ctx kana">ドライブ ツール</button>
            <div class="tab-right">
                <svg class="collapse"><use href="#i-up"/></svg>
                <button class="help" aria-label="ヘルプ">?</button>
            </div>
        </nav>

        <div class="ribbon">
            <div class="group g-clip">
                <div class="g-body">
                    <button class="big w-pin"><svg class="s-pin"><use href="#i-pin"/></svg><span>クイック アクセス<br>にピン留めする</span></button>
                    <button class="big w-copy" disabled><svg class="s-copy"><use href="#i-copy"/></svg><span>コピー</span></button>
                    <div class="stack-paste">
                        <button class="big"><svg class="s-paste"><use href="#i-paste"/></svg><span>貼り付け</span></button>
                        <button class="small-btn" disabled><svg class="s-cut"><use href="#i-cut"/></svg>切り取り</button>
                    </div>
                    <div class="stack">
                        <button class="small-btn kana" disabled><svg><use href="#i-path"/></svg>パスのコピー</button>
                        <button class="small-btn kana"><svg><use href="#i-pasteshort"/></svg>ショートカットの貼り付け</button>
                    </div>
                </div>
                <div class="g-name kana">クリップボード</div>
            </div>
            <div class="group g-org">
                <div class="g-body">
                    <button class="big w-60" disabled><svg class="s-40"><use href="#i-moveto"/></svg><span>移動先</span><svg class="tri"><use href="#i-tri"/></svg></button>
                    <button class="big w-60" disabled><svg class="s-40"><use href="#i-copyto"/></svg><span>コピー先</span><svg class="tri"><use href="#i-tri"/></svg></button>
                    <span class="vline"></span>
                    <button class="big w-60"><svg class="s-40"><use href="#i-delete"/></svg><span>削除</span><svg class="tri"><use href="#i-tri"/></svg></button>
                    <button class="big w-60" disabled><svg class="s-40"><use href="#i-rename"/></svg><span>名前<br>の変更</span></button>
                </div>
                <div class="g-name">整理</div>
            </div>
            <div class="group g-new">
                <div class="g-body">
                    <button class="big w-70"><svg class="s-30"><use href="#i-newfolder"/></svg><span>新しい<br>フォルダー</span></button>
                    <div class="stack">
                        <button class="small-btn"><svg><use href="#i-newitem"/></svg>新しいアイテム<svg class="tri"><use href="#i-tri"/></svg></button>
                        <button class="small-btn kana"><svg><use href="#i-shortcut"/></svg>ショートカット<svg class="tri"><use href="#i-tri"/></svg></button>
                    </div>
                </div>
                <div class="g-name">新規</div>
            </div>
            <div class="group g-open">
                <div class="g-body">
                    <button class="big w-70"><svg class="s-34"><use href="#i-prop"/></svg><span class="kana">プロパティ</span><svg class="tri"><use href="#i-tri"/></svg></button>
                    <div class="stack tall">
                        <button class="small-btn" disabled><svg><use href="#i-open"/></svg>開く<svg class="tri"><use href="#i-tri"/></svg></button>
                        <button class="small-btn" disabled><svg><use href="#i-edit"/></svg>編集</button>
                        <button class="small-btn"><svg><use href="#i-history"/></svg>履歴</button>
                    </div>
                </div>
                <div class="g-name">開く</div>
            </div>
            <div class="group g-sel">
                <div class="g-body">
                    <div class="stack">
                        <button class="small-btn"><svg><use href="#i-selall"/></svg>すべて選択</button>
                        <button class="small-btn"><svg><use href="#i-selnone"/></svg>選択解除</button>
                        <button class="small-btn"><svg><use href="#i-selinv"/></svg>選択の切り替え</button>
                    </div>
                </div>
                <div class="g-name">選択</div>
            </div>
        </div>

        <div class="addressrow">
            <div class="navbtns">
                <button aria-label="戻る"><svg viewBox="0 0 20 18"><path d="M1 9h19M9 1L1 9l8 8" fill="none" stroke="#6b6b6b" stroke-width="2"/></svg></button>
                <button aria-label="進む"><svg viewBox="0 0 20 18"><path d="M0 9h19M11 1l8 8-8 8" fill="none" stroke="#d6d6d6" stroke-width="2"/></svg></button>
                <button class="recent" aria-label="履歴"><svg><use href="#i-v"/></svg></button>
                <button class="upbtn" aria-label="上へ"><svg viewBox="0 0 16 20"><path d="M8 1v19M1 9l7-8 7 8" fill="none" stroke="#6b6b6b" stroke-width="2"/></svg></button>
            </div>
            <div class="address">
                <svg class="drv"><use href="#i-drive"/></svg>
                <svg class="crumb-sep"><use href="#i-r"/></svg>
                <a href="#">PC</a>
                <svg class="crumb-sep"><use href="#i-r"/></svg>
                <a href="#">WINPE (F:)</a>
                <button class="drop" aria-label="候補"><svg><use href="#i-v"/></svg></button>
                <button class="refresh" aria-label="更新"><svg viewBox="0 0 18 20"><path d="M13 4a7 7 0 1 1-8 0" fill="none" stroke="#6b6b6b" stroke-width="3"/><path d="M1 1h8v8z" fill="#6b6b6b"/></svg></button>
            </div>
            <label class="search">
                <svg viewBox="0 0 20 22"><circle cx="13" cy="8" r="6.500" fill="none" stroke="#777" stroke-width="1.300"/><path d="M9 13l-8 8" stroke="#777" stroke-width="1.300"/></svg>
                <input type="text" aria-label="検索" placeholder="WINPE (F:)の検索">
            </label>
        </div>

        <div class="ex-body">
            <ul class="navtree">
                <li class="n2 fold"><svg><use href="#i-folder"/></svg>Documents</li>
                <li class="n2 fold"><svg><use href="#i-folder"/></svg>Pictures</li>
                <li class="n1"><svg><use href="#i-pc"/></svg>PC</li>
                <li class="n2 kana"><svg><use href="#i-3d"/></svg>3D オブジェクト</li>
                <li class="n2"><svg><use href="#i-phone"/></svg>Galaxy S22</li>
                <li class="n2 kana"><svg><use href="#i-down"/></svg>ダウンロード</li>
                <li class="n2 kana"><svg><use href="#i-desktop"/></svg>デスクトップ</li>
                <li class="n2 kana"><svg><use href="#i-document"/></svg>ドキュメント</li>
                <li class="n2 kana"><svg><use href="#i-picture"/></svg>ピクチャ</li>
                <li class="n2 kana"><svg><use href="#i-video"/></svg>ビデオ</li>
                <li class="n2 kana"><svg><use href="#i-music"/></svg>ミュージック</li>
                <li class="n2 kana"><svg><use href="#i-windrive"/></svg>ローカル ディスク (C:)</li>
                <li class="n2 kana"><svg><use href="#i-driven"/></svg>ローカル ディスク (D:)</li>
                <li class="n2 current"><svg><use href="#i-driven"/></svg>WINPE (F:)</li>
                <li class="n1"><svg><use href="#i-driven"/></svg>WINPE (F:)</li>
                <li class="n2 fold"><svg><use href="#i-folder"/></svg>_efi</li>
            </ul>
            <div class="ex-scroll nav-scroll"><svg><use href="#i-up"/></svg><div class="thumb"></div></div>
            <div class="files">
                <table class="file-table">
                    <colgroup><col><col class="c-date"><col class="c-kind"><col class="c-bytes"></colgroup>
                    <thead><tr><th>名前</th><th class="sorted">更新日時<svg><use href="#i-v"/></svg></th><th>種類</th><th class="kana">サイズ</th></tr></thead>
                    <tbody>
                        <tr><td><svg><use href="#i-file"/></svg>install.wim</td><td>2022/07/13 21:34</td><td>WIM ファイル</td><td>3,596,845 KB</td></tr>
                        <tr><td><svg><use href="#i-text"/></svg>diskpart.txt</td><td>2022/06/23 5:09</td><td>テキスト ドキュメント</td><td>1 KB</td></tr>
                        <tr><td><svg><use href="#i-folder"/></svg>_efi</td><td>2022/07/13 21:25</td><td>ファイル フォルダー</td><td></td></tr>
                        <tr><td><svg><use href="#i-folder"/></svg>bg-bg</td><td>2022/07/13 21:25</td><td>ファイル フォルダー</td><td></td></tr>
                        <tr><td><svg><use href="#i-folder"/></svg>Boot</td><td>2022/07/13 21:25</td><td>ファイル フォルダー</td><td></td></tr>
                        <tr><td><svg><use href="#i-folder"/></svg>cs-cz</td><td>2022/07/13 21:25</td><td>ファイル フォルダー</td><td></td></tr>
                        <tr><td><svg><use href="#i-folder"/></svg>da-dk</td><td>2022/07/13 21:25</td><td>ファイル フォルダー</td><td></td></tr>
                        <tr><td><svg><use href="#i-folder"/></svg>de-de</td><td>2022/07/13 21:25</td><td>ファイル フォルダー</td><td></td></tr>
                        <tr><td><svg><use href="#i-folder"/></svg>el-gr</td><td>2022/07/13 21:25</td><td>ファイル フォルダー</td><td></td></tr>
                        <tr><td><svg><use href="#i-folder"/></svg>en-gb</td><td>2022/07/13 21:25</td><td>ファイル フォルダー</td><td></td></tr>
                        <tr><td><svg><use href="#i-folder"/></svg>en-us</td><td>2022/07/13 21:25</td><td>ファイル フォルダー</td><td></td></tr>
                        <tr><td><svg><use href="#i-folder"/></svg>es-es</td><td>2022/07/13 21:25</td><td>ファイル フォルダー</td><td></td></tr>
                        <tr><td><svg><use href="#i-folder"/></svg>es-mx</td><td>2022/07/13 21:25</td><td>ファイル フォルダー</td><td></td></tr>
                        <tr><td><svg><use href="#i-folder"/></svg>et-ee</td><td>2022/07/13 21:25</td><td>ファイル フォルダー</td><td></td></tr>
                        <tr><td><svg><use href="#i-folder"/></svg>fi-fi</td><td>2022/07/13 21:25</td><td>ファイル フォルダー</td><td></td></tr>
                        <tr><td><svg><use href="#i-folder"/></svg>fr-ca</td><td>2022/07/13 21:25</td><td>ファイル フォルダー</td><td></td></tr>
                        <tr><td><svg><use href="#i-folder"/></svg>fr-fr</td><td>2022/07/13 21:25</td><td>ファイル フォルダー</td><td></td></tr>
                    </tbody>
                </table>
            </div>
            <div class="ex-scroll file-scroll"><svg><use href="#i-up"/></svg><div class="thumb"></div></div>
            <aside class="preview">
                <p>40 個の項目</p>
                <svg><use href="#i-drive"/></svg>
            </aside>
        </div>
    </section>
</body>
</html>
```

FILE: styles.css
```css
* {
    margin: 0;
    padding: 0;
    box-sizing: border-box;
}

body {
    font-family: "Open Sans", "Noto Sans CJK JP", sans-serif;
    font-feature-settings: "palt";
    font-size: 17px;
    line-height: 26px;
    color: #111;
    background: #fff;
    height: 100vh;
    overflow: hidden;
    display: flex;
    flex-direction: column;
}

button, input {
    font: inherit;
    font-feature-settings: inherit;
    color: inherit;
    background: none;
    border: none;
}

ul {
    list-style: none;
}

svg {
    flex: none;
}

.kana {
    font-size: 15px;
}

.kana-s {
    font-size: 14px;
}

.sprite {
    position: absolute;
    width: 0;
    height: 0;
}

.ico {
    width: 24px;
    height: 26px;
}

/* ---------- Computer Management ---------- */
.mmc {
    flex: none;
    position: relative;
    background: #f0f0f0;
    border-left: 1px solid #5b6b7a;
    border-bottom: 1px solid #6b6862;
    box-shadow: 0 2px 12px rgba(0, 0, 0, 0.45);
    z-index: 1;
}

.titlebar {
    position: relative;
    display: flex;
    align-items: center;
    height: 50px;
    padding-left: 12px;
    gap: 6px;
    background: #fff;
}

.titlebar::after {
    content: '';
    position: absolute;
    right: 0;
    bottom: -1px;
    width: 22%;
    height: 1px;
    background: #e6e6e6;
}

.title-text {
    font-size: 15px;
    font-weight: 400;
    color: #8c8c8c;
}

.win-controls {
    display: flex;
    margin-left: auto;
}

.win-controls button {
    width: 70px;
    height: 50px;
}

.win-controls svg {
    width: 16px;
    height: 16px;
}

.menubar {
    display: flex;
    align-items: center;
    gap: 23px;
    height: 39px;
    padding-left: 15px;
    background: #fff;
    border-bottom: 1px solid #b4b7bb;
}

.toolbar {
    display: flex;
    height: 37px;
    padding-left: 2px;
    background: #fff;
    border-bottom: 1px solid #e2e2e2;
}

.toolbar button {
    width: 35px;
    height: 36px;
    display: flex;
    align-items: center;
    justify-content: center;
}

.toolbar svg {
    width: 24px;
    height: 26px;
}

.toolbar .on {
    background: #cce8ff;
}

.tool-sep {
    width: 1px;
    height: 32px;
    margin: 2px 8px 0 1px;
    background: #b5b5b5;
}

.panes {
    display: flex;
    gap: 7px;
    padding-top: 10px;
}

.tree {
    width: 285px;
    height: 849px;
    padding: 2px 0 519px 7px;
    font-size: 16px;
    background: #fff;
    border: 1px solid #828790;
    border-top-width: 2px;
    display: flex;
    flex-direction: column;
}

.tree li {
    flex: 1;
    display: flex;
    align-items: center;
    white-space: nowrap;
}

.tree .lv0 span {
    margin-left: 8px;
}

.tree .chev {
    width: 12px;
    height: 12px;
    color: #a0a0a0;
    margin-right: 10px;
}

.tree .chev.open {
    color: #404040;
}

.tree .lv1 {
    padding-left: 5px;
}

.tree .lv1 span,
.tree .lv2 span,
.tree .lv3 span {
    margin-left: 9px;
}

.tree .lv2 {
    padding-left: 33px;
}

.tree .lv3 {
    padding-left: 55px;
}

.tree .selected {
    align-self: flex-start;
    margin-left: 54px;
    padding: 0 6px 0 1px;
    background: #d9d9d9;
}

.disks {
    flex: 1;
    min-width: 0;
    display: flex;
    flex-direction: column;
    border-left: 2px solid #7a7a7a;
    border-top: 3px solid #7a7a7a;
    margin-bottom: 2px;
}

.volumes {
    height: 462px;
    background: #fff;
    overflow: hidden;
}

.vol-table {
    width: 100%;
    table-layout: fixed;
    border-collapse: separate;
    border-spacing: 0;
}

.c-vol { width: 212px; }
.c-lay { width: 81px; }
.c-type { width: 82px; }
.c-fs { width: 126px; }
.c-size { width: 108px; }
.c-pct { width: 87px; }

.vol-table th {
    height: 33px;
    padding-left: 8px;
    text-align: left;
    font-weight: 400;
    white-space: nowrap;
    overflow: hidden;
    background: #f0f0f0;
    border-right: 2px solid #7a7a7a;
    border-bottom: 2px solid #7a7a7a;
    box-shadow: inset 2px 2px 0 #fff;
}

.vol-table th:last-child {
    border-right: none;
}

.vol-table td {
    height: 28px;
    padding-left: 10px;
    white-space: nowrap;
}

.vol-table td:nth-child(2) {
    font-size: 15px;
}

.vol-table td:nth-child(3),
.vol-table td:nth-child(5) {
    font-size: 14px;
}

.vol-table td:first-child {
    padding-left: 5px;
}

.vol-table td svg {
    width: 20px;
    height: 14px;
    margin-right: 2px;
}

.vol-table td span {
    display: inline-block;
    height: 27px;
    padding-left: 3px;
}

.focus td span {
    background: #f0f0f0;
}

.hscroll {
    display: flex;
    align-items: center;
    justify-content: space-between;
    height: 28px;
    padding: 0 8px 0 5px;
}

.hscroll svg,
.vscroll svg {
    width: 12px;
    height: 12px;
    color: #505050;
}

.hthumb {
    flex: 1;
    height: 27px;
    margin: 0 56px 0 7px;
    background: #cdcdcd;
}

.splitter {
    height: 13px;
    border-top: 2px solid #fff;
    border-bottom: 3px solid #7a7a7a;
    border-right: 2px solid #7a7a7a;
}

.diskview {
    display: flex;
    height: 306px;
}

.disk-rows {
    flex: 1;
    min-width: 0;
}

.disk-row {
    display: flex;
    height: 183px;
    padding-top: 8px;
    border-bottom: 2px solid #fff;
}

.disk-row.cd {
    height: 123px;
    padding-top: 0;
}

.disk-label {
    width: 147px;
    padding: 13px 0 0 13px;
    border-right: 2px solid #a6a6a6;
    border-top: 2px solid #fff;
    border-bottom: 2px solid #a6a6a6;
    white-space: nowrap;
}

.cd .disk-label {
    padding-top: 4px;
    border-top: none;
    border-bottom: none;
}

.disk-label h2 {
    display: flex;
    align-items: center;
    font-size: 17px;
    font-weight: 600;
    line-height: 26px;
}

.vol-ico {
    width: 20px;
    height: 14px;
    margin: 0 4px 8px 2px;
}

.cd .disk-label h2 {
    height: 34px;
    align-items: flex-end;
}

.cd-ico {
    width: 24px;
    height: 28px;
    margin: 0 5px 6px 2px;
}

.partitions {
    display: flex;
    width: 804px;
    height: 171px;
    border: solid #a6a6a6;
    border-width: 0 2px 2px 0;
    padding-right: 4px;
}

.part {
    flex: 1;
    min-width: 0;
    height: 164px;
    border: solid #a6a6a6;
    border-width: 0 2px 2px 0;
}

.part.small {
    flex: none;
    width: 201px;
}

.bar {
    height: 26px;
    margin-top: 10px;
    margin-left: 2px;
    border-bottom: 2px solid #8a8a9a;
    background: #000080;
}

.part-body {
    height: 120px;
    margin: 2px 4px 0 6px;
    padding: 4px 0 0 4px;
    background: #fff;
    border-top: 2px solid #999;
    border-left: 2px solid #999;
    white-space: nowrap;
    overflow: hidden;
}

.part b {
    font-weight: 600;
}

.vscroll {
    width: 26px;
    display: flex;
    flex-direction: column;
    align-items: center;
    padding: 9px 0;
    border-left: 1px solid #fff;
}

.vthumb {
    width: 25px;
    height: 100px;
    margin: 107px 0 auto;
    background: #cdcdcd;
}

.legend {
    display: flex;
    align-items: center;
    height: 33px;
    padding-left: 6px;
    border-top: 2px solid #fff;
    border-bottom: 2px solid #999;
    border-right: 2px solid #999;
}

.legend i {
    width: 16px;
    height: 21px;
    margin-right: 8px;
}

.legend span {
    margin-right: 8px;
}

.unalloc { background: #000; }
.primary { background: #000080; }

.actions {
    width: 283px;
    margin: 0 1px 2px 0;
    background: #fff;
    border-left: 3px solid #7a7a7a;
    border-top: 3px solid #7a7a7a;
}

.actions h2 {
    height: 36px;
    padding: 5px 0 0 8px;
    font-size: 17px;
    font-weight: 700;
    background: #f0f0f0;
    border-top: 2px solid #fff;
    border-bottom: 2px solid #a6a6a6;
}

.actions button {
    display: flex;
    align-items: center;
    justify-content: space-between;
    width: 100%;
    height: 40px;
}

.actions .act-head {
    height: 41px;
    margin-top: 1px;
    padding: 0 11px;
    font-size: 16px;
    background: linear-gradient(#b9d1ea, #99b4d1);
}

.act-head svg {
    width: 14px;
    height: 8px;
}

.act-item {
    padding: 0 13px 0 46px;
}

.act-item svg {
    width: 8px;
    height: 16px;
}

.statusbar {
    display: flex;
    height: 38px;
    border-top: 2px solid #e2e2e2;
}

.statusbar span {
    margin-top: 2px;
    border-right: 1px solid #dcdcdc;
}

.statusbar span:nth-child(1) { flex: 1; }
.statusbar span:nth-child(2) { width: 296px; }
.statusbar span:nth-child(3) { width: 188px; }

/* ---------- Explorer ---------- */
.explorer {
    flex: 1;
    min-height: 0;
    display: flex;
    flex-direction: column;
    border-right: 1px solid #8a8a8a;
}

.ex-title {
    display: flex;
    height: 49px;
    padding-top: 6px;
}

.qat {
    display: flex;
    align-items: center;
    width: 322px;
    padding: 0 0 6px 11px;
}

.drv {
    width: 24px;
    height: 14px;
    margin-top: 6px;
}

.qsep {
    width: 1px;
    height: 22px;
    margin-left: 5px;
    background: #8a8a8a;
}

.qat button {
    height: 26px;
    width: 20px;
    margin-left: 17px;
}

.qat button svg {
    width: 20px;
    height: 26px;
}

.qat button + button {
    margin-left: 12px;
}

.qat button.qmore {
    margin: 0 10px 0 7px;
}

.qat .qmore svg {
    width: 10px;
    height: 10px;
}

.ctx-head {
    width: 137px;
    text-align: center;
    line-height: 46px;
    background: #c1f09a;
    color: #2c3a20;
}

.ex-name {
    margin-left: 13px;
    line-height: 38px;
    color: #999;
}

.explorer .win-controls button {
    height: 40px;
}

.tabs {
    display: flex;
    height: 42px;
    border-bottom: 1px solid #dadbdc;
}

.t-file {
    width: 84px;
    height: 37px;
    background: #0063b1;
    color: #fff;
}

.t-home {
    width: 81px;
    height: 42px;
    background: #f5f6f7;
    border: 1px solid #dadbdc;
    border-bottom: none;
}

.t-plain {
    width: 77px;
}

.t-ctx {
    width: 138px;
    height: 32px;
    margin-left: 3px;
    padding-top: 8px;
    border: solid #dadbdc;
    border-width: 0 1px;
}

.tab-right {
    display: flex;
    align-items: center;
    gap: 12px;
    margin-left: auto;
    padding-right: 5px;
}

.collapse {
    width: 18px;
    height: 14px;
    color: #8a8a8a;
}

.help {
    width: 22px;
    height: 24px;
    border-radius: 50%;
    background: #0063b1;
    color: #fff;
    font-weight: 700;
    line-height: 24px;
}

.ribbon {
    display: flex;
    height: 172px;
    background: #f5f6f7;
    border-bottom: 1px solid #dadbdc;
}

.group {
    display: flex;
    flex-direction: column;
    margin: 4px 0 3px;
    border-right: 1px solid #e0e1e2;
}

.g-clip { width: 500px; }
.g-org { width: 275px; }
.g-new { width: 238px; }
.g-open { width: 169px; }
.g-sel { width: 165px; }

.g-clip .g-body { padding-left: 8px; }
.g-org .g-body { padding-left: 4px; }
.g-new .g-body { padding-left: 3px; }
.g-open .g-body { padding-left: 5px; }
.g-sel .g-body { padding-left: 5px; }

.g-body {
    display: flex;
    flex: 1;
}

.g-name {
    height: 28px;
    text-align: center;
    color: #444;
}

.big {
    display: flex;
    flex-direction: column;
    align-items: center;
    font-size: 16px;
    line-height: 28px;
    padding-top: 9px;
    align-self: flex-start;
    white-space: nowrap;
}

.big > svg:first-child {
    height: 48px;
    margin-bottom: 6px;
}

.w-pin { width: 122px; }
.w-copy { width: 64px; }
.w-60 { width: 62px; }
.w-70 { width: 74px; }

.s-pin { width: 30px; }
.s-copy { width: 36px; }
.s-paste { width: 30px; }
.s-40 { width: 40px; }
.s-34 { width: 34px; }
.s-30 { width: 30px; }

.tri {
    width: 8px;
    height: 5px;
}

.big:disabled,
.small-btn:disabled {
    color: #7a7a7a;
}

.stack-paste {
    width: 96px;
}

.stack-paste .big {
    width: 68px;
}

.stack-paste .small-btn {
    height: 36px;
    padding-left: 4px;
    font-size: 16px;
}

.stack {
    padding-top: 1px;
}

.small-btn {
    display: flex;
    align-items: center;
    gap: 6px;
    height: 35px;
    padding-left: 5px;
    white-space: nowrap;
}

.g-new .small-btn {
    gap: 5px;
}

.g-new .stack .small-btn:first-child {
    font-size: 16px;
}

.small-btn > svg:first-child {
    width: 22px;
    height: 24px;
}

.small-btn .tri {
    width: 8px;
    height: 5px;
}

.stack.tall {
    padding-top: 5px;
}

.tall .small-btn {
    height: 40px;
}

.vline {
    width: 2px;
    height: 116px;
    margin: 7px 5px 0;
    background: #dcdde0;
}

.addressrow {
    display: flex;
    height: 58px;
    padding: 6px 12px 0 0;
}

.navbtns {
    display: flex;
    align-items: center;
    width: 158px;
    padding-left: 19px;
    gap: 26px;
}

.navbtns button {
    display: flex;
}

.navbtns svg {
    width: 20px;
    height: 20px;
}

.navbtns .recent svg {
    width: 10px;
    height: 10px;
    color: #6b6b6b;
}

.navbtns .recent {
    margin-right: -8px;
    margin-left: -6px;
}

.navbtns .upbtn {
    margin-left: -4px;
}

.address {
    flex: 1;
    display: flex;
    align-items: center;
    height: 51px;
    padding-left: 3px;
    border: 1px solid #d9d9d9;
}

.address a {
    color: #111;
    text-decoration: none;
}

.crumb-sep {
    width: 11px;
    height: 12px;
    margin: 0 11px 0 9px;
    color: #555;
}

.drop {
    margin-left: auto;
    width: 44px;
    height: 49px;
    color: #555;
}

.drop svg {
    width: 15px;
    height: 14px;
}

.refresh {
    display: flex;
    align-items: center;
    justify-content: center;
    width: 48px;
    height: 49px;
    border-left: 1px solid #d9d9d9;
}

.refresh svg {
    width: 18px;
    height: 20px;
}

.search {
    display: flex;
    align-items: center;
    width: 604px;
    height: 51px;
    margin-left: 12px;
    padding-left: 21px;
    border: 1px solid #d9d9d9;
}

.search svg {
    width: 20px;
    height: 22px;
    margin-right: 19px;
}

.search input {
    flex: 1;
    min-width: 0;
    outline: none;
}

.search input::placeholder {
    color: #6d6d6d;
}

.ex-body {
    flex: 1;
    min-height: 0;
    display: flex;
    padding-top: 7px;
}

.navtree {
    width: 253px;
    height: 658px;
    flex: none;
    display: flex;
    flex-direction: column;
}

.navtree li {
    flex: 1;
    display: flex;
    align-items: center;
    gap: 5px;
    white-space: nowrap;
}

.navtree svg {
    width: 23px;
    height: 24px;
}

.navtree .n1 {
    padding-left: 37px;
    margin-top: 13px;
}

.navtree .n2 {
    padding-left: 49px;
}

.navtree .fold {
    padding-left: 47px;
}

.navtree .fold svg {
    margin-right: 2px;
}

.navtree .current {
    background: #d9d9d9;
}

.ex-scroll {
    width: 24px;
    background: #f0f0f0;
    color: #505050;
    display: flex;
    flex-direction: column;
    align-items: center;
    padding-top: 10px;
}

.ex-scroll svg {
    width: 14px;
    height: 12px;
}

.thumb {
    width: 24px;
    background: #cdcdcd;
}

.nav-scroll .thumb {
    height: 250px;
    margin-top: 65px;
}

.nav-scroll {
    margin-right: 5px;
}

.file-scroll .thumb {
    height: 405px;
    margin-top: 6px;
}

.files {
    flex: 1;
    min-width: 0;
    padding-right: 31px;
    overflow: hidden;
}

.file-table {
    width: 100%;
    table-layout: fixed;
    border-collapse: separate;
    border-spacing: 0;
}

.c-date { width: 243px; }
.c-kind { width: 203px; }
.c-bytes { width: 136px; }

.file-table th {
    position: relative;
    height: 46px;
    padding-left: 10px;
    text-align: left;
    font-weight: 400;
    color: #4c607a;
    border-right: 1px solid #e5e5e5;
}

.file-table th:first-child {
    padding-left: 29px;
}

.sorted svg {
    position: absolute;
    top: 0;
    left: 48%;
    width: 12px;
    height: 9px;
    color: #777;
}

.file-table tbody::before {
    content: '';
    display: block;
    height: 11px;
}

.file-table td {
    height: 35px;
    padding-left: 10px;
    color: #6d6d6d;
    white-space: nowrap;
}

.file-table td:first-child {
    padding-left: 30px;
    color: #111;
}

.file-table td:nth-child(3) {
    font-size: 15px;
}

.file-table td:last-child {
    text-align: right;
    padding-right: 12px;
}

.file-table td svg {
    width: 18px;
    height: 24px;
    margin: 0 12px 4px 0;
    vertical-align: middle;
}

.preview {
    width: 416px;
    padding: 12px 0 0 37px;
    border-left: 3px solid #f7f7f7;
}

.preview p {
    font-size: 22px;
    line-height: 34px;
}

.preview svg {
    width: 128px;
    height: 70px;
    margin: 127px 0 0 8px;
}
```
